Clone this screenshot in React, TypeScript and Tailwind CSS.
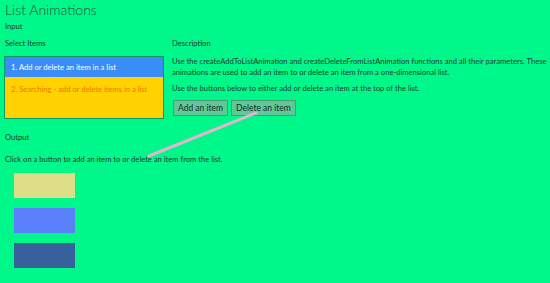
import React from 'react';

const items = [
  { label: '1. Add or delete an item in a list', className: 'bg-[#3a8cf8] text-white h-[20px] pt-[5px]' },
  { label: '2. Searching - add or delete items in a list', className: 'bg-[#ffd200] text-[#f07800] h-[41px] pt-[7px]' },
];

const outputBoxes = ['bg-[#dede86]', 'bg-[#5a80fa]', 'bg-[#38609c]'];

export default function App() {
  return (
    <div className="relative w-[550px] h-[283px] overflow-hidden bg-[#00f88a] text-[#1f3a2c] font-['Lato',sans-serif] text-[7.6px] leading-[11px]">
      <h1 className="pl-[5px] pt-[1px] text-[14px] leading-[18px] font-light text-[#2b4437]">List Animations</h1>
      <div className="pl-[5px] mt-[2px]">Input</div>

      <div className="flex mt-[6px]">
        <div className="w-[172px] shrink-0 pl-[5px]">
          <div>Select Items</div>
          <div className="mt-[7px] ml-[-1px] w-[160px] border border-[#0a9a60]">
            {items.map((item) => (
              <div key={item.label} className={`${item.className} px-[6px]`}>
                {item.label}
              </div>
            ))}
          </div>
        </div>

        <div className="flex-1 pr-[2px]">
          <div>Description</div>
          <p className="mt-[7px]">
            Use the createAddToListAnimation and createDeleteFromListAnimation functions and all their parameters. These
            animations are used to add an item to or delete an item from a one-dimensional list.
          </p>
          <p className="mt-[5px]">Use the buttons below to either add or delete an item at the top of the list.</p>
          <div className="flex gap-[3px] mt-[6px] ml-[1px]">
            <button className="h-[16px] px-[4px] text-[8.5px] bg-[#5fc898] border border-[#4c9a76] text-[#1a2a22]">Add an item</button>
            <button className="h-[16px] px-[4px] text-[8.5px] bg-[#5fc898] border border-[#4c9a76] text-[#1a2a22]">Delete an item</button>
          </div>
        </div>
      </div>

      <div className="pl-[5px] mt-[13px]">Output</div>
      <div className="pl-[5px] mt-[11px]">Click on a button to add an item to or delete an item from the list.</div>
      <div className="flex flex-col gap-[10px] pl-[14px] mt-[8px]">
        {outputBoxes.map((c) => (
          <div key={c} className={`${c} w-[61px] h-[25px]`} />
        ))}
      </div>

      <svg className="absolute left-0 top-0 pointer-events-none" width="550" height="283">
        <line x1="149" y1="156" x2="256" y2="113" stroke="#e2b4d2" strokeWidth="3" strokeLinecap="round" />
      </svg>
    </div>
  );
}
